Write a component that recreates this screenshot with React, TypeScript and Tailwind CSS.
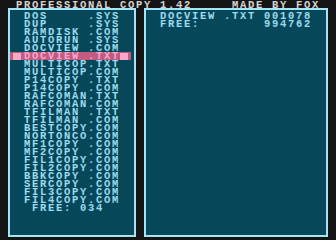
const FILES: [string, string][] = [
  ['DOS', 'SYS'],
  ['DUP', 'SYS'],
  ['RAMDISK', 'COM'],
  ['AUTORUN', 'SYS'],
  ['DOCVIEW', 'COM'],
  ['DOCVIEW', 'TXT'],
  ['MULTICOP', 'TXT'],
  ['MULTICOP', 'COM'],
  ['P14COPY', 'TXT'],
  ['P14COPY', 'COM'],
  ['RAFCOMAN', 'TXT'],
  ['RAFCOMAN', 'COM'],
  ['TFILMAN', 'TXT'],
  ['TFILMAN', 'COM'],
  ['BESTCOPY', 'COM'],
  ['NORTONCO', 'COM'],
  ['MF1COPY', 'COM'],
  ['MF2COPY', 'COM'],
  ['FIL1COPY', 'COM'],
  ['FIL2COPY', 'COM'],
  ['BBKCOPY', 'COM'],
  ['SERCOPY', 'COM'],
  ['FIL3COPY', 'COM'],
  ['FIL4COPY', 'COM'],
];

const SELECTED = 5;

export default function App() {
  return (
    <div className="w-[336px] h-[240px] bg-[#141414] overflow-hidden font-['Liberation_Mono',monospace] font-bold text-[10.5px] leading-[8px] tracking-[1.7px] whitespace-pre">
      {/* Title line */}
      <div className="h-[8px] pt-[1px] pl-[16px] text-[#d4d4d4]">PROFESSIONAL COPY 1.42     MADE BY FOX</div>

      <div className="flex gap-[8px] px-[8px]">
        {/* Source directory */}
        <div className="w-[128px] h-[229px] border-2 border-[#a4e4f4] bg-[#06475a] pt-[2px] text-[#9edcee]">
          {FILES.map(([name, ext], i) =>
            i === SELECTED ? (
              <div key={i} className="flex items-center w-[121px] h-[8px] bg-[#c25a82] text-[#f6a8c8]">
                <span className="ml-[3px] mr-[3px] w-[8px] h-[7px] bg-[#f6a8c8]" />
                <span>{name.padEnd(8, ' ') + '.' + ext}</span>
                <span className="w-[8px] h-[7px] bg-[#f6a8c8]" />
              </div>
            ) : (
              <div key={i} className="h-[8px] pl-[14px]">
                {name.padEnd(8, ' ') + '.' + ext}
              </div>
            )
          )}
          <div className="h-[8px] pl-[22px]">FREE: 034</div>
        </div>

        {/* File info */}
        <div className="w-[184px] h-[229px] border-2 border-[#a4e4f4] bg-[#06475a] pt-[2px] text-[#9edcee]">
          <div className="h-[8px] pl-[14px]">DOCVIEW .TXT 001078</div>
          <div className="h-[8px] pl-[14px]">FREE:        994762</div>
        </div>
      </div>
    </div>
  );
}
